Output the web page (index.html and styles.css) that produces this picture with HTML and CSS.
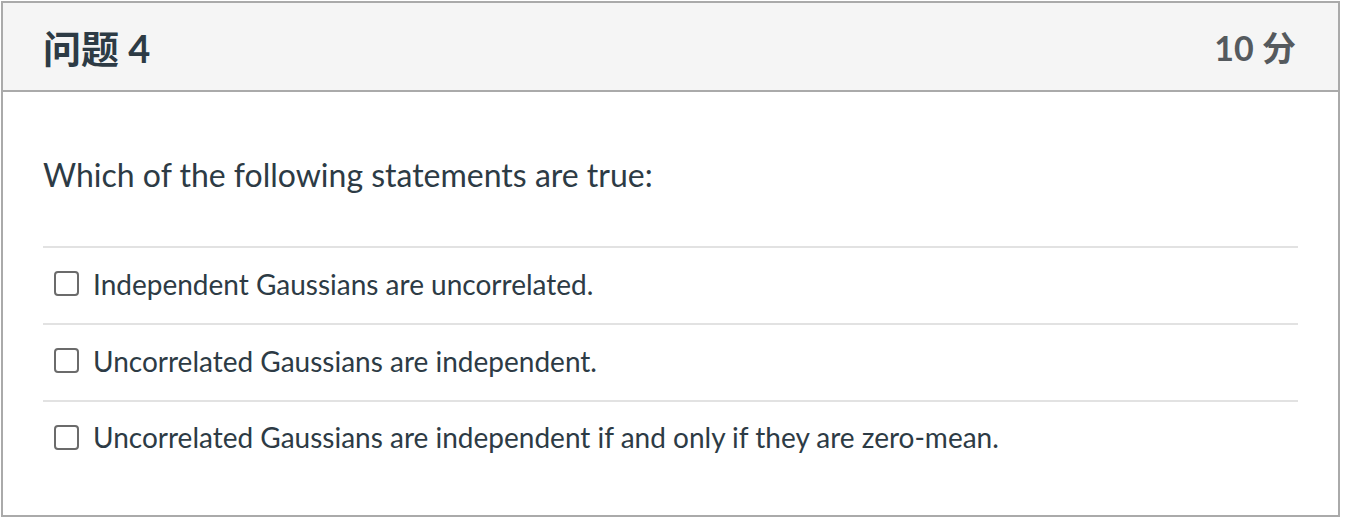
FILE: index.html
```html
<!DOCTYPE html>
<html lang="zh">
<head>
<meta charset="utf-8">
<link rel="stylesheet" href="styles.css">
</head>
<body>
<div class="card">
  <div class="card-header">
    <h2 class="title">问题 4</h2>
    <div class="points">10 分</div>
  </div>
  <div class="card-body">
    <p class="question">Which of the following statements are true:</p>
    <ul class="answers">
      <li class="answer"><span class="box"></span><span class="label">Independent Gaussians are uncorrelated.</span></li>
      <li class="answer"><span class="box"></span><span class="label">Uncorrelated Gaussians are independent.</span></li>
      <li class="answer"><span class="box"></span><span class="label">Uncorrelated Gaussians are independent if and only if they are zero-mean.</span></li>
    </ul>
  </div>
</div>
</body>
</html>
```
FILE: styles.css
```css
html, body {
  margin: 0;
  padding: 0;
  background: #fff;
}
body {
  padding: 1px 0 0 1px;
  font-family: Lato, "Noto Sans CJK SC", sans-serif;
  color: #2d3b45;
}
.card {
  width: 1335px;
  height: 512px;
  border: 2px solid #aaaaaa;
  display: flex;
  flex-direction: column;
}
.card-header {
  height: 87px;
  background: #f5f5f5;
  border-bottom: 2px solid #aaaaaa;
  display: flex;
  align-items: center;
  justify-content: space-between;
  padding: 0 42px 0 40px;
}
.title {
  margin: 0;
  font-size: 38px;
  font-weight: 700;
  color: #2d3b45;
}
.points {
  font-size: 34px;
  font-weight: 700;
  color: #555a5e;
}
.card-body {
  padding: 0 40px;
}
.question {
  margin: 0;
  padding-top: 63px;
  height: 91px;
  font-size: 32px;
  line-height: 40px;
}
.answers {
  list-style: none;
  margin: 0;
  padding: 0;
}
.answer {
  height: 71px;
  padding-bottom: 4px;
  border-top: 2px solid #e2e2e2;
  display: flex;
  align-items: center;
  gap: 14px;
  padding-left: 11px;
}
.answer:last-child {
  height: 70px;
}
.box {
  width: 21px;
  height: 21px;
  border: 2px solid #6b6b6b;
  border-radius: 4px;
  flex: none;
}
.label {
  font-size: 28px;
  color: #2d3b45;
}
```
